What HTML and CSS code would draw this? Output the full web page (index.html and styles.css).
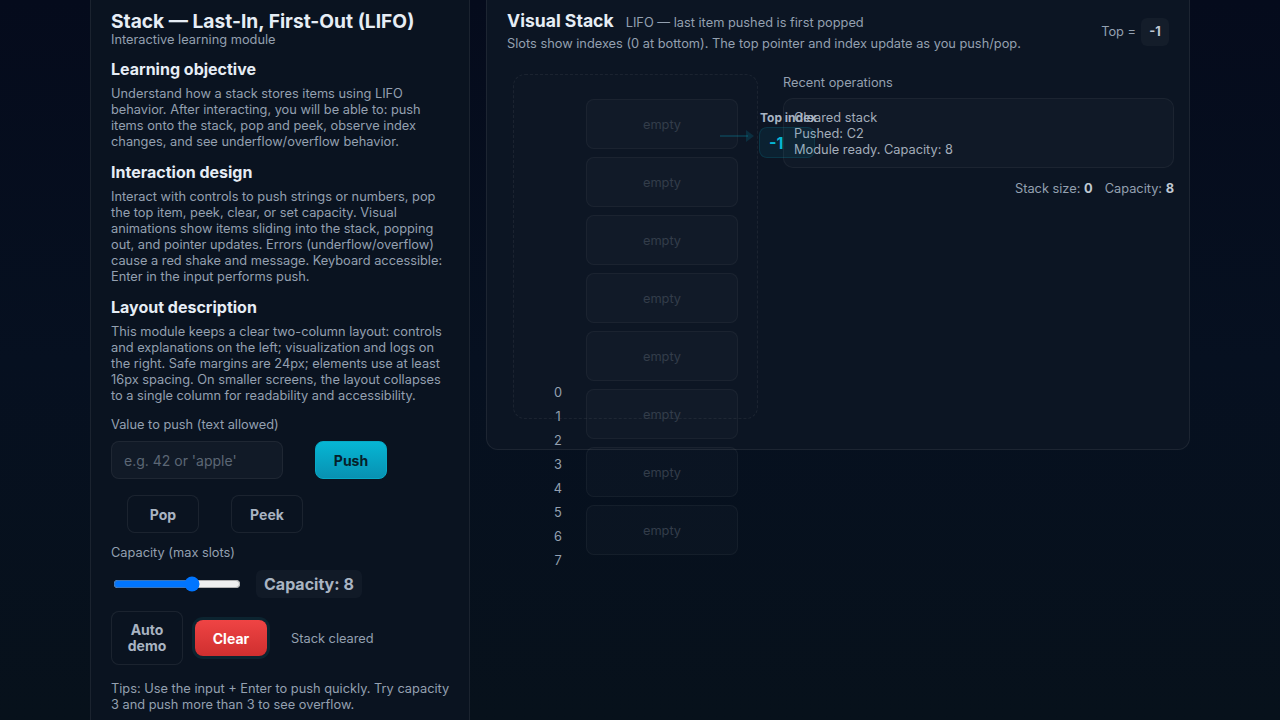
FILE: index.html
```html
<!DOCTYPE html>
<html lang="en">
<head>
<meta charset="utf-8">
<title>Stack — LIFO</title>
<link rel="stylesheet" href="styles.css">
</head>
<body>
<div class="app">
  <aside class="panel left">
    <h1 class="title">Stack — Last-In, First-Out (LIFO)</h1>
    <div class="subtitle">Interactive learning module</div>

    <h2 class="h2">Learning objective</h2>
    <p class="text">Understand how a stack stores items using LIFO behavior. After interacting, you will be able to: push items onto the stack, pop and peek, observe index changes, and see underflow/overflow behavior.</p>

    <h2 class="h2">Interaction design</h2>
    <p class="text">Interact with controls to push strings or numbers, pop the top item, peek, clear, or set capacity. Visual animations show items sliding into the stack, popping out, and pointer updates. Errors (underflow/overflow) cause a red shake and message. Keyboard accessible: Enter in the input performs push.</p>

    <h2 class="h2">Layout description</h2>
    <p class="text">This module keeps a clear two-column layout: controls and explanations on the left; visualization and logs on the right. Safe margins are 24px; elements use at least 16px spacing. On smaller screens, the layout collapses to a single column for readability and accessibility.</p>

    <label class="label label-push" for="val">Value to push (text allowed)</label>
    <div class="row row-push">
      <input id="val" class="input" type="text" placeholder="e.g. 42 or 'apple'">
      <button class="btn btn-primary">Push</button>
    </div>
    <div class="row row-pop">
      <button class="btn btn-ghost">Pop</button>
      <button class="btn btn-ghost">Peek</button>
    </div>

    <label class="label label-cap" for="cap">Capacity (max slots)</label>
    <div class="row row-cap">
      <input id="cap" class="range" type="range" min="1" max="12" value="8">
      <span class="cap-badge">Capacity: 8</span>
    </div>

    <div class="row row-actions">
      <button class="btn btn-ghost btn-auto">Auto<br>demo</button>
      <button class="btn btn-danger">Clear</button>
      <span class="status">Stack cleared</span>
    </div>

    <p class="text tips">Tips: Use the input + Enter to push quickly. Try capacity 3 and push more than 3 to see overflow.</p>
  </aside>

  <section class="panel right">
    <header class="viz-head">
      <div class="viz-titles">
        <div class="viz-title-row">
          <h2 class="viz-title">Visual Stack</h2>
          <span class="viz-tag">LIFO — last item pushed is first popped</span>
        </div>
        <div class="viz-sub">Slots show indexes (0 at bottom). The top pointer and index update as you push/pop.</div>
      </div>
      <div class="top-eq">Top = <span class="top-badge">-1</span></div>
    </header>

    <div class="viz-row">
      <div class="stack-box">
        <div class="indexes">
          <span>0</span><span>1</span><span>2</span><span>3</span><span>4</span><span>5</span><span>6</span><span>7</span>
        </div>
        <div class="slots">
          <div class="slot">empty</div>
          <div class="slot">empty</div>
          <div class="slot">empty</div>
          <div class="slot">empty</div>
          <div class="slot">empty</div>
          <div class="slot">empty</div>
          <div class="slot">empty</div>
          <div class="slot">empty</div>
        </div>
        <div class="pointer">
          <svg class="arrow" width="36" height="14" viewBox="0 0 36 14"><line x1="0" y1="7" x2="28" y2="7" stroke="rgba(6,182,212,0.2)" stroke-width="2"/><path d="M26 1 L34 7 L26 13 Z" fill="rgba(6,182,212,0.16)"/></svg>
          <div class="pointer-col">
            <span class="pointer-label">Top index</span>
            <span class="pointer-badge">-1</span>
          </div>
        </div>
      </div>

      <div class="log-col">
        <div class="log-title">Recent operations</div>
        <div class="log">
          <div>Cleared stack</div>
          <div>Pushed: C2</div>
          <div>Module ready. Capacity: 8</div>
        </div>
        <div class="stats">
          <span>Stack size: <b>0</b></span>
          <span>Capacity: <b>8</b></span>
        </div>
      </div>
    </div>
  </section>
</div>
</body>
</html>
```

FILE: styles.css
```css
* { box-sizing: border-box; }
html, body { height: 100%; }
body {
  margin: 0;
  font-family: Inter, "Noto Sans", "Liberation Sans", sans-serif;
  color: #94a0b0;
  background: linear-gradient(180deg, #050b1c 0%, #061020 50%, #07111b 100%);
  overflow: hidden;
}
.app {
  width: 1100px;
  margin: -12px auto 0;
  display: grid;
  grid-template-columns: 380px 704px;
  gap: 16px;
  align-items: start;
}
.panel {
  border: 1px solid rgba(255,255,255,0.07);
}
.left {
  padding: 21px 15px 40px 20px;
  border-radius: 12px;
  background: #0a1320;
  min-height: 780px;
}
.title {
  margin: 0;
  font-size: 19.2px;
  line-height: 22px;
  font-weight: 700;
  color: #e6edf5;
}
.subtitle {
  font-size: 12.8px;
  line-height: 16px;
  color: #94a0b0;
}
.h2 {
  margin: 11px 0 0;
  font-size: 16px;
  line-height: 20px;
  font-weight: 700;
  color: #e6edf5;
}
.h2 + .text { margin-top: 7px; }
.text {
  margin: 0;
  font-size: 12.8px;
  line-height: 16px;
  color: #94a0b0;
}
.text + .h2 { margin-top: 12px; }
.label {
  display: block;
  font-size: 12.8px;
  line-height: 16px;
  color: #94a0b0;
}
.label-push { margin-top: 13px; }
.label-cap { margin-top: 12px; }
.row { display: flex; align-items: center; }
.row-push { margin-top: 8px; gap: 32px; }
.row-pop { margin-top: 16px; gap: 32px; padding-left: 16px; }
.row-cap { margin-top: 9px; gap: 13px; }
.row-actions { margin-top: 13px; gap: 12px; }
.input {
  width: 172px;
  height: 38px;
  padding: 0 12px;
  border-radius: 8px;
  border: 1px solid rgba(255,255,255,0.06);
  background: #111a27;
  color: #e6edf5;
  font-family: inherit;
  font-size: 14px;
  outline: none;
}
.input::placeholder { color: #5c6775; }
.btn {
  width: 72px;
  height: 38px;
  border-radius: 8px;
  font-family: inherit;
  font-size: 14px;
  font-weight: 700;
  cursor: pointer;
  padding: 0;
}
.btn-primary {
  border: 1px solid #07a9c6;
  background: linear-gradient(180deg, #06b6d4 0%, #0891b2 100%);
  color: #06202a;
}
.btn-ghost {
  border: 1px solid rgba(255,255,255,0.07);
  background: rgba(255,255,255,0.005);
  color: #a9b4c2;
}
.btn-auto {
  height: 54px;
  line-height: 16px;
}
.btn-danger {
  height: 36px;
  border: none;
  background: linear-gradient(180deg, #ef4444 0%, #cf2f2f 100%);
  color: #ffffff;
  box-shadow: 0 0 0 3px #0c2430;
}
.status {
  margin-left: 12px;
  font-size: 12.8px;
  color: #94a0b0;
}
.range {
  width: 128px;
  margin: 2px;
}
.cap-badge {
  height: 28px;
  display: inline-flex;
  align-items: center;
  padding: 0 8px;
  border-radius: 6px;
  background: #111a27;
  color: #a9b4c2;
  font-size: 16px;
  font-weight: 700;
}
.tips { margin-top: 16px; }

.right {
  padding: 20px 20px 30px;
  border-radius: 12px;
  background: #0c1523;
}
.viz-head {
  display: flex;
  justify-content: space-between;
  align-items: center;
}
.viz-title-row {
  display: flex;
  align-items: baseline;
  gap: 12px;
}
.viz-title {
  margin: 0;
  font-size: 17.6px;
  line-height: 24px;
  font-weight: 700;
  color: #e6edf5;
}
.viz-tag { font-size: 12.8px; color: #94a0b0; }
.viz-sub {
  font-size: 12.8px;
  line-height: 16px;
  margin-top: 3px;
  color: #94a0b0;
}
.top-eq {
  display: flex;
  align-items: center;
  gap: 5px;
  font-size: 12.8px;
  color: #94a0b0;
  margin-top: 2px;
}
.top-badge {
  width: 28px;
  height: 28px;
  display: inline-flex;
  align-items: center;
  justify-content: center;
  border-radius: 6px;
  background: #141d2a;
  color: #c0c9d4;
  font-weight: 700;
}
.viz-row {
  display: flex;
  gap: 25px;
  margin: 22px -5px 0 6px;
  align-items: flex-start;
}
.stack-box {
  position: relative;
  width: 245px;
  height: 345px;
  flex: none;
  display: flex;
  gap: 10px;
  padding: 24px 19px 24px 26px;
  border: 1px dashed rgba(255,255,255,0.06);
  border-radius: 12px;
  background: rgba(255,255,255,0.008);
}
.indexes {
  width: 36px;
  flex: none;
  display: flex;
  flex-direction: column;
  align-items: center;
  padding-top: 282px;
  font-size: 12.8px;
  line-height: 24px;
  color: #94a0b0;
}
.slots {
  flex: 1;
  display: flex;
  flex-direction: column;
  gap: 8px;
}
.slot {
  height: 50px;
  flex: none;
  display: flex;
  align-items: center;
  justify-content: center;
  border-radius: 8px;
  border: 1px solid rgba(255,255,255,0.045);
  background: rgba(255,255,255,0.02);
  color: #333d4a;
  font-size: 12.8px;
}
.pointer {
  position: absolute;
  left: 206px;
  top: 36px;
  display: flex;
  align-items: flex-end;
}
.arrow { margin-bottom: 15px; margin-right: 3px; }
.pointer-col { display: flex; flex-direction: column; }
.pointer-label {
  font-size: 12px;
  line-height: 14px;
  font-weight: 700;
  color: #a9b4c2;
  white-space: nowrap;
  margin-left: 1px;
}
.pointer-badge {
  width: 56px;
  height: 31px;
  margin-top: 2px;
  display: flex;
  align-items: center;
  padding-left: 9px;
  border-radius: 8px;
  border: 1px solid rgba(6,182,212,0.14);
  background: rgba(6,182,212,0.08);
  color: #06b6d4;
  font-size: 16px;
  font-weight: 700;
}
.log-col { flex: 1; }
.log-title {
  margin-top: 1px;
  font-size: 12.8px;
  line-height: 16px;
  color: #94a0b0;
}
.log {
  margin-top: 7px;
  padding: 11px 10px 9px;
  border-radius: 10px;
  border: 1px solid rgba(255,255,255,0.05);
  background: rgba(255,255,255,0.02);
  font-size: 12.8px;
  line-height: 16px;
  color: #a3adba;
}
.stats {
  margin-top: 13px;
  display: flex;
  justify-content: flex-end;
  gap: 12px;
  font-size: 12.8px;
  line-height: 16px;
  color: #94a0b0;
}
.stats b { color: #c0c9d4; }
```
